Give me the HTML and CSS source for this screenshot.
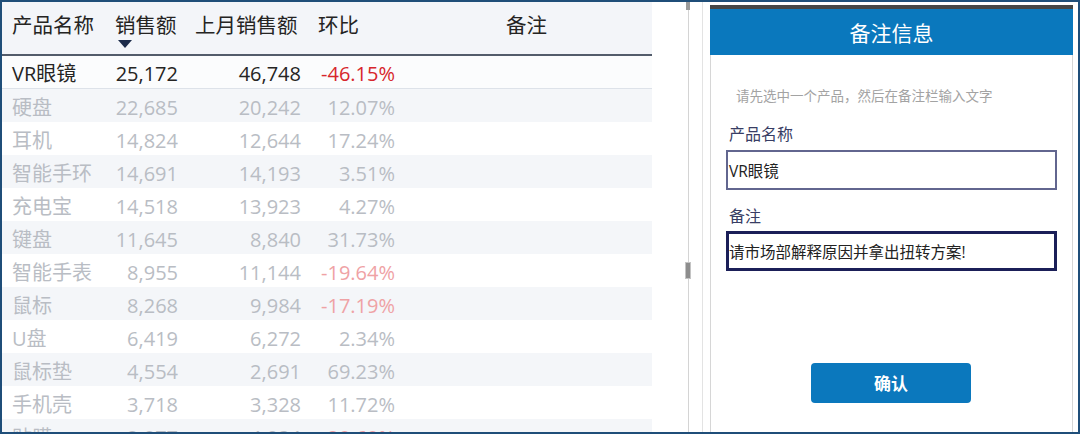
FILE: index.html
```html
<!DOCTYPE html>
<html lang="zh">
<head>
<meta charset="utf-8">
<title>备注信息</title>
<link rel="stylesheet" href="styles.css">
</head>
<body>
<div class="frame">
  <div class="left">
    <div class="table">
      <div class="row head">
        <div class="c c1">产品名称</div>
        <div class="c c2 sorted"><span>销售额</span><i class="arrow"></i></div>
        <div class="c c3">上月销售额</div>
        <div class="c c4">环比</div>
        <div class="c c5">备注</div>
      </div>
      <div class="row sel">
        <div class="c c1">VR眼镜</div><div class="c c2 n">25,172</div><div class="c c3 n">46,748</div><div class="c c4 n neg">-46.15%</div><div class="c c5"></div>
      </div>
      <div class="row dim alt">
        <div class="c c1">硬盘</div><div class="c c2 n">22,685</div><div class="c c3 n">20,242</div><div class="c c4 n">12.07%</div><div class="c c5"></div>
      </div>
      <div class="row dim">
        <div class="c c1">耳机</div><div class="c c2 n">14,824</div><div class="c c3 n">12,644</div><div class="c c4 n">17.24%</div><div class="c c5"></div>
      </div>
      <div class="row dim alt">
        <div class="c c1">智能手环</div><div class="c c2 n">14,691</div><div class="c c3 n">14,193</div><div class="c c4 n">3.51%</div><div class="c c5"></div>
      </div>
      <div class="row dim">
        <div class="c c1">充电宝</div><div class="c c2 n">14,518</div><div class="c c3 n">13,923</div><div class="c c4 n">4.27%</div><div class="c c5"></div>
      </div>
      <div class="row dim alt">
        <div class="c c1">键盘</div><div class="c c2 n">11,645</div><div class="c c3 n">8,840</div><div class="c c4 n">31.73%</div><div class="c c5"></div>
      </div>
      <div class="row dim">
        <div class="c c1">智能手表</div><div class="c c2 n">8,955</div><div class="c c3 n">11,144</div><div class="c c4 n neg">-19.64%</div><div class="c c5"></div>
      </div>
      <div class="row dim alt">
        <div class="c c1">鼠标</div><div class="c c2 n">8,268</div><div class="c c3 n">9,984</div><div class="c c4 n neg">-17.19%</div><div class="c c5"></div>
      </div>
      <div class="row dim">
        <div class="c c1">U盘</div><div class="c c2 n">6,419</div><div class="c c3 n">6,272</div><div class="c c4 n">2.34%</div><div class="c c5"></div>
      </div>
      <div class="row dim alt">
        <div class="c c1">鼠标垫</div><div class="c c2 n">4,554</div><div class="c c3 n">2,691</div><div class="c c4 n">69.23%</div><div class="c c5"></div>
      </div>
      <div class="row dim">
        <div class="c c1">手机壳</div><div class="c c2 n">3,718</div><div class="c c3 n">3,328</div><div class="c c4 n">11.72%</div><div class="c c5"></div>
      </div>
      <div class="row dim alt">
        <div class="c c1">贴膜</div><div class="c c2 n">2,877</div><div class="c c3 n">4,034</div><div class="c c4 n neg">-28.68%</div><div class="c c5"></div>
      </div>
    </div>
  </div>
  <div class="scroll">
    <div class="thumb-top"></div>
    <div class="thumb-mid"></div>
  </div>
  <div class="gap1"></div>
  <div class="vline"></div>
  <div class="gap2"></div>
  <div class="panel">
    <div class="panel-top"></div>
    <div class="panel-head">备注信息</div>
    <div class="panel-body">
      <div class="hint">请先选中一个产品，然后在备注栏输入文字</div>
      <div class="label first">产品名称</div>
      <div class="field f1">VR眼镜</div>
      <div class="label second">备注</div>
      <div class="field f2">请市场部解释原因并拿出扭转方案!</div>
      <div class="btn-wrap"><div class="btn">确认</div></div>
    </div>
  </div>
  <div class="gap3"></div>
</div>
</body>
</html>
```

FILE: styles.css
```css
* { box-sizing: border-box; }
html, body { margin: 0; padding: 0; background: #ffffff; }
body {
  width: 1080px;
  height: 434px;
  overflow: hidden;
  font-family: "Open Sans", "Noto Sans CJK SC", sans-serif;
}
.frame {
  width: 1080px;
  height: 434px;
  border: 2px solid #1f4e79;
  display: flex;
  overflow: hidden;
  background: #ffffff;
}
.left {
  width: 684px;
  flex: none;
  overflow: hidden;
}
.table {
  width: 650px;
  display: flex;
  flex-direction: column;
}
.row {
  display: flex;
  height: 33px;
  align-items: center;
  padding-top: 4px;
  font-size: 20px;
  line-height: 28px;
  color: #252423;
}
.row.head {
  height: 54px;
  align-items: flex-start;
  background: #f3f5f9;
  border-bottom: 2px solid #535c6b;
  font-size: 20.5px;
  padding-top: 9px;
}
.row.sel {
  background: #fbfcfd;
  border-bottom: 1px solid #dde2e9;
  padding-top: 3px;
}
.row.alt { background: #f4f6f9; }
.row.dim { color: #b9bdc4; }
.c { white-space: nowrap; flex: none; }
.c1 { width: 106px; padding-left: 10px; }
.c2 { width: 78px; }
.c3 { width: 123px; }
.c4 { width: 94px; }
.c5 { flex: 1; text-align: center; padding-right: 2px; }
.head .c2 { padding-left: 7px; }
.head .c3 { padding-left: 9px; }
.head .c4 { padding-left: 9px; }
.n { text-align: right; padding-right: 8px; }
.neg { color: #d7262c; }
.dim .neg { color: #efa2a5; }
.sorted { display: flex; flex-direction: column; }
.arrow {
  display: block;
  width: 0;
  height: 0;
  margin-left: 3px;
  margin-top: 1px;
  border-left: 7.5px solid transparent;
  border-right: 7.5px solid transparent;
  border-top: 8px solid #1c2b4a;
}
.scroll {
  width: 6px;
  flex: none;
  display: flex;
  flex-direction: column;
  align-items: center;
  background: linear-gradient(to right, transparent 2px, #d4d4d4 2px, #d4d4d4 3px, transparent 3px);
}
.thumb-top {
  width: 4px;
  height: 8px;
  background: #9b9b9b;
  margin-left: -2px;
}
.thumb-mid {
  width: 6px;
  height: 17px;
  margin-top: 252px;
  margin-left: -2px;
  background: #8d8d8d;
  border: 1px solid #c4c4c4;
}
.gap1 { width: 10px; flex: none; }
.vline { width: 1px; flex: none; background: #e3e3e3; }
.gap2 { width: 7px; flex: none; }
.gap3 { width: 5px; flex: none; }
.panel {
  width: 363px;
  flex: none;
  display: flex;
  flex-direction: column;
  padding-top: 3px;
}
.panel-top {
  height: 4px;
  background: #464646;
}
.panel-head {
  height: 46px;
  background: #0a78bd;
  color: #ffffff;
  font-size: 21px;
  line-height: 46px;
  text-align: center;
  font-family: "Noto Sans CJK SC", sans-serif;
}
.panel-body {
  flex: 1;
  border-left: 1px solid #d6d6d6;
  border-right: 1px solid #d6d6d6;
  padding-left: 15px;
  padding-right: 15px;
  font-family: "Noto Sans CJK SC", sans-serif;
}
.hint {
  margin-top: 30px;
  padding-left: 10px;
  font-size: 13.5px;
  line-height: 20px;
  color: #a3a3a3;
  white-space: nowrap;
}
.label {
  font-size: 16px;
  line-height: 22px;
  color: #383d64;
  padding-left: 3px;
}
.label.first { margin-top: 17px; }
.label.second { margin-top: 14px; }
.field {
  width: 331px;
  height: 40px;
  display: flex;
  align-items: center;
  padding-left: 1px;
  font-size: 15.5px;
  color: #222222;
  white-space: nowrap;
  font-family: "Open Sans", "Noto Sans CJK SC", sans-serif;
}
.f1 {
  margin-top: 6px;
  border: 2px solid #62668f;
}
.f2 {
  margin-top: 5px;
  border: 3px solid #1b1f58;
  padding-left: 0;
}
.btn-wrap {
  margin-top: 92px;
  display: flex;
  justify-content: center;
  padding-right: 1px;
}
.btn {
  width: 160px;
  height: 40px;
  border-radius: 4px;
  background: #0b78bd;
  color: #ffffff;
  font-size: 17px;
  font-weight: bold;
  line-height: 40px;
  text-align: center;
}
```
